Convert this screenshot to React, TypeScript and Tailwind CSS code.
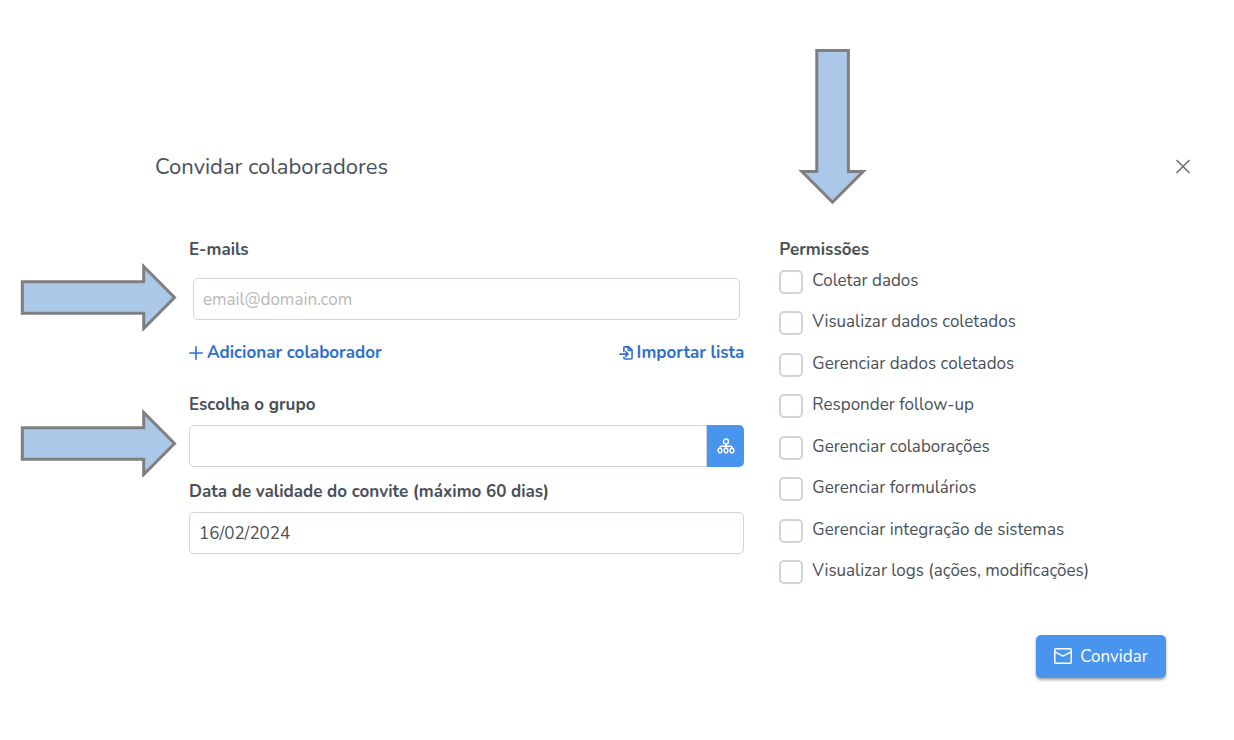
import { useState } from "react";

const permissions = [
  "Coletar dados",
  "Visualizar dados coletados",
  "Gerenciar dados coletados",
  "Responder follow-up",
  "Gerenciar colaborações",
  "Gerenciar formulários",
  "Gerenciar integração de sistemas",
  "Visualizar logs (ações, modificações)",
];

function RightArrow({ className }: { className: string }) {
  return (
    <svg aria-hidden="true" viewBox="0 0 157 68" className={`pointer-events-none absolute h-[68px] w-[157px] ${className}`}>
      <path d="M2.300 18.700H123.700V3.500L154.500 34.500L123.700 65.500V50.300H2.300Z" fill="#abc8e9" stroke="#7f7f7f" strokeWidth="3" />
    </svg>
  );
}

function DownArrow() {
  return (
    <svg aria-hidden="true" viewBox="0 0 68 157" className="pointer-events-none absolute left-[799px] top-12 h-[157px] w-[68px]">
      <path d="M17.800 2.500H49.400V123.500H64.200L33.500 154.200L2.800 123.500H17.800Z" fill="#abc8e9" stroke="#7f7f7f" strokeWidth="3" />
    </svg>
  );
}

function PlusIcon() {
  return (
    <svg aria-hidden="true" viewBox="0 0 14 14" className="size-3.5" stroke="currentColor" strokeWidth="1.6" strokeLinecap="round">
      <path d="M7 .8V13.200M.8 7H13.200" />
    </svg>
  );
}

function ImportIcon() {
  return (
    <svg aria-hidden="true" viewBox="0 0 15 15" className="size-3.5" fill="none" stroke="currentColor" strokeWidth="1.700" strokeLinecap="round" strokeLinejoin="round">
      <path d="M5.200 5.500V2Q5.200 .9 6.400 .9H10.500L14 4.300V12.700Q14 14 12.700 14H6.500Q5.200 14 5.200 12.700V12M10 1V4.700H13.800M.9 8.700H9.500M7 6.100L9.700 8.700L7 11.300" />
    </svg>
  );
}

function GroupIcon() {
  return (
    <svg aria-hidden="true" viewBox="0 0 18 16" className="mb-px h-4 w-[18px]" fill="none" stroke="currentColor" strokeWidth="1.400">
      <circle cx="9" cy="3.500" r="2.500" />
      <ellipse cx="3" cy="12.500" rx="1.900" ry="2.300" />
      <ellipse cx="9" cy="12.500" rx="1.900" ry="2.300" />
      <ellipse cx="15" cy="12.500" rx="1.900" ry="2.300" />
      <path d="M9 6V10.200M3 10.200V9.500Q3 8.200 4.300 8.200H13.700Q15 8.200 15 9.500V10.200" />
    </svg>
  );
}

function MailIcon() {
  return (
    <svg aria-hidden="true" viewBox="0 0 18 16" className="mb-px h-4 w-[18px]" fill="none" stroke="currentColor" strokeWidth="1.500" strokeLinejoin="round">
      <rect x=".8" y=".8" width="16.400" height="14.400" rx="1" />
      <path d="M1 3.800L9 8.200L17 3.800" />
    </svg>
  );
}

export default function App() {
  const [email, setEmail] = useState("");
  const [group, setGroup] = useState("");
  const [date, setDate] = useState("16/02/2024");

  return (
    <main className="relative min-h-screen bg-white pt-[147px] pb-14 font-['Nunito','Lato',sans-serif] text-[17px] leading-6 text-[#495057]">
      <header className="flex items-center justify-between pr-[43px] pl-[155px]">
        <h1 className="text-[22px] leading-10">Convidar colaboradores</h1>
        <button type="button" aria-label="Fechar" className="flex size-4 items-center justify-center text-[#6c757d]">
          <svg aria-hidden="true" viewBox="0 0 16 16" className="size-4" stroke="currentColor" strokeWidth="1.7" strokeLinecap="round">
            <path d="M2 1.500L14 13.500M14 1.500L2 13.500" />
          </svg>
        </button>
      </header>

      <form className="pt-[51px] pr-[68px] pl-[189px]" onSubmit={(e) => e.preventDefault()}>
        <div className="grid grid-cols-12 gap-[35px]">
          <div className="col-span-7">
            <label htmlFor="email" className="block font-bold">E-mails</label>
            <div className="px-1 pt-4">
              <input
                id="email"
                type="email"
                placeholder="email@domain.com"
                value={email}
                onChange={(e) => setEmail(e.target.value)}
                className="h-[42px] w-full rounded-[5px] border border-[#ced4da] px-[9px] placeholder:text-[#b8b8b8]"
              />
            </div>
            <div className="mt-[21px] flex items-center justify-between font-bold text-[#3070cc]">
              <button type="button" className="flex items-center gap-1">
                <PlusIcon />
                Adicionar colaborador
              </button>
              <button type="button" className="flex items-center gap-1">
                <ImportIcon />
                Importar lista
              </button>
            </div>

            <label htmlFor="group" className="mt-7 block font-bold">Escolha o grupo</label>
            <div className="mt-2 flex">
              <input
                id="group"
                type="text"
                value={group}
                onChange={(e) => setGroup(e.target.value)}
                className="h-[42px] min-w-0 flex-1 rounded-l-[5px] border border-[#ced4da] px-[9px]"
              />
              <button type="button" aria-label="Selecionar grupo" className="flex w-[37px] items-center justify-center rounded-r-[5px] bg-[#4994ec] text-white">
                <GroupIcon />
              </button>
            </div>

            <label htmlFor="date" className="mt-[13px] block font-bold">Data de validade do convite (máximo 60 dias)</label>
            <input
              id="date"
              type="text"
              value={date}
              onChange={(e) => setDate(e.target.value)}
              className="mt-2 h-[42px] w-full rounded-[5px] border border-[#ced4da] px-[9px]"
            />
          </div>

          <fieldset className="col-span-5">
            <legend className="font-bold">Permissões</legend>
            <div className="mt-[7px] flex min-h-[315px] flex-col justify-between">
              {permissions.map((name) => (
                <label key={name} className="flex items-start gap-[9px]">
                  <input type="checkbox" className="mt-px size-6 shrink-0 appearance-none rounded-[5px] border-2 border-[#ced4da] bg-white checked:border-[#4994ec] checked:bg-[#4994ec]" />
                  <span>{name}</span>
                </label>
              ))}
            </div>
          </fieldset>
        </div>

        <div className="mt-[51px] flex justify-end">
          <button type="submit" className="flex h-[43px] w-[130px] items-center justify-center gap-2 rounded-[5px] bg-[#4994ec] text-white shadow-[0_2px_3px_rgba(0,0,0,0.35)]">
            <MailIcon />
            Convidar
          </button>
        </div>
      </form>

      <RightArrow className="left-5 top-[263px]" />
      <RightArrow className="left-5 top-[409px]" />
      <DownArrow />
    </main>
  );
}
